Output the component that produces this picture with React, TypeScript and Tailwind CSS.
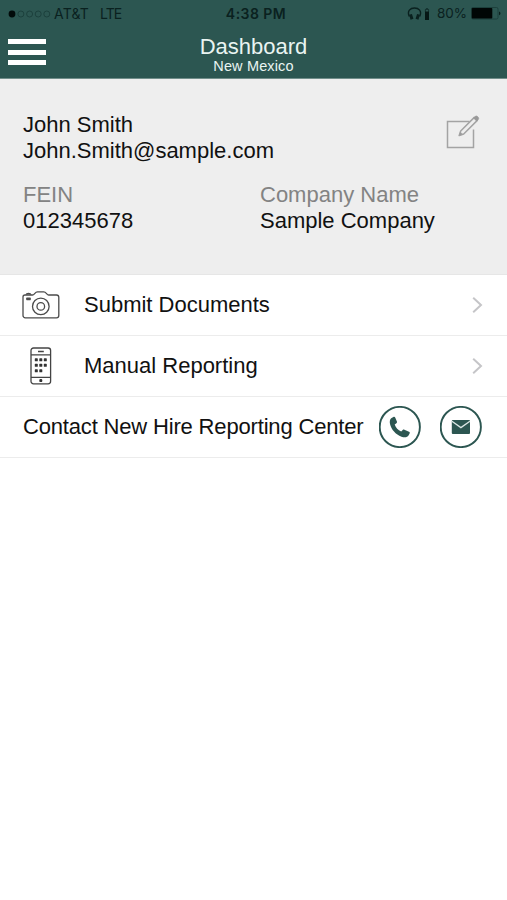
import React from "react";

function StatusBar() {
  return (
    <div className="grid h-[27px] grid-cols-[1fr_auto_1fr] items-center pr-[6px] pl-2 text-[13px] leading-none text-[#0a211f]">
      <div className="flex items-center">
        <svg width="43" height="8" viewBox="0 0 43 8" fill="none" stroke="#183b37" strokeWidth="0.8">
          <circle cx="4" cy="4" r="3.4" fill="#020b0a" stroke="none" />
          <circle cx="12.9" cy="4" r="3" />
          <circle cx="21.6" cy="4" r="3" />
          <circle cx="30.2" cy="4" r="3" />
          <circle cx="38.8" cy="4" r="3" />
        </svg>
        <span className="ml-[3px] w-[46px] whitespace-nowrap font-['Inter',sans-serif] text-[14px] tracking-[0.2px]">AT&amp;T</span>
        <span className="font-['Inter',sans-serif] text-[14px] tracking-[-0.9px]">LTE</span>
      </div>
      <span className="ml-[3px] font-['Inter',sans-serif] text-[14px] font-semibold tracking-[0.45px]">4:38 PM</span>
      <div className="flex items-center justify-end">
        <svg width="23" height="14" viewBox="0 0 23 14" fill="none" stroke="#0a211f">
          <path d="M2.3 9.5C-.3 4 3.4 1 7.5 1s7.8 3 5.2 8.5" strokeWidth="1.4" />
          <path d="M3.5 7.4l1.5 4.8M11.5 7.4L10 12.2" strokeWidth="3" />
          <path d="M18 4.5h4V13h-4z" fill="#061715" stroke="none" />
          <path d="M18.4 5V2.4h3.2V5M19.2 1.5h1.6" strokeWidth=".7" />
        </svg>
        <span className="ml-[7px] font-['Inter',sans-serif] text-[13.5px]">80%</span>
        <svg className="ml-[4px]" width="30" height="13" viewBox="0 0 30 13">
          <rect x=".5" y=".5" width="26.5" height="11.5" rx="1.5" fill="none" stroke="#183b37" strokeWidth=".8" />
          <rect x=".8" y="1" width="20.5" height="10.5" rx=".8" fill="#000605" />
          <path d="M28 4.4c2 .6 2 3.2 0 3.8z" fill="#0a211f" />
        </svg>
      </div>
    </div>
  );
}

function Header() {
  return (
    <header className="h-[79px] border-b border-[#718e8a] bg-[#2c5651]">
      <StatusBar />
      <div className="grid h-[51px] grid-cols-[38px_1fr_38px] px-2 text-center text-[#e9f4f1]">
        <button aria-label="Menu" className="mt-[12px] flex h-[26px] w-[38px] flex-col justify-between">
          <span className="h-[5px] w-full bg-white" />
          <span className="h-[5px] w-full bg-white" />
          <span className="h-[5px] w-full bg-white" />
        </button>
        <div className="pt-[8px]">
          <h1 className="text-[22px] leading-[24px]">Dashboard</h1>
          <p className="text-[14.5px] leading-[14px] tracking-[0.15px]">New Mexico</p>
        </div>
      </div>
    </header>
  );
}

function EditIcon() {
  return (
    <svg width="36" height="36" viewBox="0 0 36 36" fill="none" stroke="#a3a3a3" strokeWidth="1.5">
      <path d="M24.5 7.5H2.5v26h26V15.5" />
      <path d="M14.2 21.6l1.5-4.6L29.3 3.4l3 3L18.7 20z" strokeLinejoin="round" />
      <path d="M28.6 4.1l1.8-1.8c1.3-1.2 4.2 1.6 3 3l-1.8 1.8z" fill="#999" stroke="#999" strokeWidth=".7" />
      <path d="M14.2 21.6l1.2-3.5 2.1 2.2z" fill="#999" strokeWidth=".6" />
    </svg>
  );
}

function CameraIcon() {
  return (
    <svg width="38" height="28" viewBox="0 0 38 28" fill="none" stroke="#4b4b4b" strokeWidth="1.3">
      <path d="M3 4h7.5c2 0 2.4-3.1 5-3.1h6.2c2.6 0 3 3.1 5 3.1H34.5a2.3 2.3 0 0 1 2.3 2.3V24.5a2.3 2.3 0 0 1-2.3 2.3H3.3A2.3 2.3 0 0 1 1 24.5V6a2 2 0 0 1 2-2z" />
      <path d="M4.2 3.7c.2-1.7 4.4-1.7 4.6 0" strokeWidth="1.4" />
      <circle cx="18.8" cy="15.4" r="8.3" />
      <circle cx="18.8" cy="15.4" r="3.8" />
      <rect x="4.2" y="6.6" width="4.6" height="2.6" rx=".6" fill="#4b4b4b" stroke="none" />
    </svg>
  );
}

function PhoneDeviceIcon() {
  return (
    <svg width="22" height="38" viewBox="0 0 22 38" fill="none" stroke="#444" strokeWidth="1.3">
      <rect x="1" y="1" width="19.6" height="35.8" rx="2.5" />
      <path d="M1 7.8h19.6M1 30.3h19.6M8 4.5h5.8" />
      <g fill="#333" stroke="none">
        <rect x="4.8" y="11.3" width="3" height="3" rx=".6" />
        <rect x="9.3" y="11.3" width="3" height="3" rx=".6" />
        <rect x="13.8" y="11.3" width="3" height="3" rx=".6" />
        <rect x="4.8" y="16.8" width="3" height="3" rx=".6" />
        <rect x="9.3" y="16.8" width="3" height="3" rx=".6" />
        <rect x="13.8" y="16.8" width="3" height="3" rx=".6" />
        <rect x="4.8" y="22.3" width="3" height="3" rx=".6" />
        <rect x="9.3" y="22.3" width="3" height="3" rx=".6" />
        <rect x="9.3" y="32.1" width="3" height="3" rx="1.2" />
      </g>
    </svg>
  );
}

function Chevron() {
  return (
    <svg className="ml-auto" width="11" height="18" viewBox="0 0 11 18" fill="none" stroke="#c5c5c8" strokeWidth="2">
      <path d="M1.2 1.7L9 9l-7.8 7.3" />
    </svg>
  );
}

function MenuRow({ icon, label }: { icon: React.ReactNode; label: string }) {
  return (
    <div className="flex h-[61px] items-center border-b border-[#ececec] pr-[24px] pl-[22px] text-[22px] text-[#111]">
      <div className="mr-[24px] flex w-[38px] justify-center">{icon}</div>
      <span className="leading-[26px]">{label}</span>
      <Chevron />
    </div>
  );
}

export default function App() {
  return (
    <div className="h-[900px] w-[507px] overflow-hidden bg-white font-['Liberation_Sans',sans-serif]">
      <Header />
      <section className="h-[196px] border-b border-[#e6e6e6] bg-[#eeeeee] pt-[33px] pr-[26px] pl-[23px] text-[22px] leading-[26px] text-[#111]">
        <div className="flex justify-between">
          <div>
            <p>John Smith</p>
            <p>John.Smith@sample.com</p>
          </div>
          <div className="pt-[2px]">
            <EditIcon />
          </div>
        </div>
        <div className="mt-[18px] grid grid-cols-[237px_1fr]">
          <div>
            <p className="text-[#838383]">FEIN</p>
            <p>012345678</p>
          </div>
          <div>
            <p className="text-[#838383]">Company Name</p>
            <p>Sample Company</p>
          </div>
        </div>
      </section>
      <MenuRow icon={<CameraIcon />} label="Submit Documents" />
      <MenuRow icon={<PhoneDeviceIcon />} label="Manual Reporting" />
      <div className="flex h-[61px] items-center border-b border-[#ececec] pr-[25px] pl-[23px] text-[22px] text-[#111]">
        <span className="leading-[26px] tracking-[-0.17px] whitespace-nowrap">Contact New Hire Reporting Center</span>
        <div className="ml-auto flex gap-[19px]">
          <svg width="42" height="42" viewBox="0 0 42 42">
            <circle cx="20.8" cy="21" r="20.1" fill="white" stroke="#2c5651" strokeWidth="1.9" />
            <path d="M12.2 12.2l2.2-1.2c.8-.4 1.6-.1 1.9.7l1.6 3.9c.3.7.1 1.3-.5 1.7l-1.7 1.3c1.1 3.2 3.3 5.5 6.5 6.9l1.500-1.500c.5-.5 1.100-.6 1.700-.3l4.600 2.100c.8.4 1 1.100.6 1.800l-1.100 2c-1.100 1.800-3.900 2.300-7 1.100C16.700 28.500 12.300 23.600 11 18c-.5-2.300-.2-4.600 1.200-5.800z" fill="#2c5651" />
          </svg>
          <svg width="42" height="42" viewBox="0 0 42 42">
            <circle cx="20.8" cy="21" r="20.1" fill="white" stroke="#2c5651" strokeWidth="1.9" />
            <rect x="11.8" y="14" width="18.2" height="14" rx="1" fill="#2c5651" />
            <path d="M11.9 15.3l9 6.300 9-6.300" fill="none" stroke="#dce7e5" strokeWidth="1.3" />
          </svg>
        </div>
      </div>
    </div>
  );
}
